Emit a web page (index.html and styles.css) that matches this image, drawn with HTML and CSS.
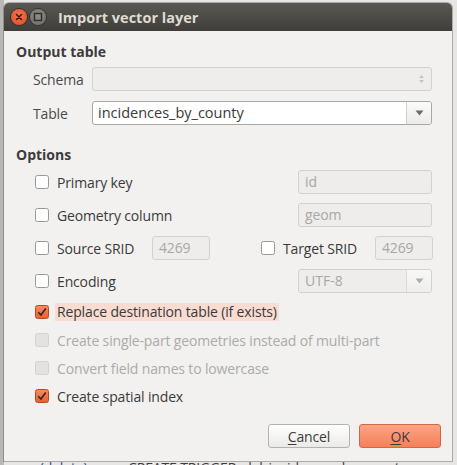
FILE: index.html
```html
<!DOCTYPE html>
<html>
<head>
<meta charset="utf-8">
<link rel="stylesheet" href="styles.css">
</head>
<body>
<div class="desk">
  <div class="dialog">
    <div class="titlebar">
      <span class="wbtn close"><svg width="16" height="16" viewBox="0 0 16 16"><path d="M5.5 5.5l5 5M10.5 5.5l-5 5" stroke="#3a1a10" stroke-width="1.6" stroke-linecap="round"/></svg></span>
      <span class="wbtn mini"><svg width="16" height="16" viewBox="0 0 16 16"><rect x="4.5" y="4.5" width="7" height="7" fill="none" stroke="#2e2d2a" stroke-width="1.4"/></svg></span>
      <span class="title">Import vector layer</span>
    </div>
    <div class="content">
      <div class="heading">Output table</div>
      <div class="formrow first">
        <span class="flabel">Schema</span>
        <div class="spin">
          <div class="spin-arrows">
            <svg width="7" height="12" viewBox="0 0 7 12"><path d="M1 5l2.5-3 2.5 3z M1 7l2.5 3 2.5-3z" fill="#c4c2be"/></svg>
          </div>
        </div>
      </div>
      <div class="formrow">
        <span class="flabel">Table</span>
        <div class="combo white">
          <span class="combo-text">incidences_by_county</span>
          <span class="combo-btn"><svg width="9" height="6" viewBox="0 0 9 6"><path d="M0.5 0.5h8l-4 5z" fill="#6e6c68"/></svg></span>
        </div>
      </div>

      <div class="heading options">Options</div>
      <div class="opts">
        <div class="orow">
          <label class="chk"><span class="box"></span><span>Primary key</span></label>
          <div class="field wide">id</div>
        </div>
        <div class="orow">
          <label class="chk"><span class="box"></span><span>Geometry column</span></label>
          <div class="field wide">geom</div>
        </div>
        <div class="orow">
          <label class="chk src"><span class="box"></span><span>Source SRID</span></label>
          <div class="field narrow">4269</div>
          <label class="chk tgt"><span class="box"></span><span>Target SRID</span></label>
          <div class="field narrow">4269</div>
        </div>
        <div class="orow">
          <label class="chk"><span class="box"></span><span>Encoding</span></label>
          <div class="combo dis wide">
            <span class="combo-text">UTF-8</span>
            <span class="combo-btn"><svg width="9" height="6" viewBox="0 0 9 6"><path d="M0.5 0.5h8l-4 5z" fill="#b0aeaa"/></svg></span>
          </div>
        </div>
      </div>
      <div class="opts2">
        <div class="srow">
          <label class="chk"><span class="box on"><svg width="12" height="12" viewBox="0 0 12 12"><path d="M2.3 6.2l2.6 2.8 4.9-6.5" fill="none" stroke="#3d2218" stroke-width="1.6"/></svg></span><span class="hl">Replace destination table (if exists)</span></label>
        </div>
        <div class="srow">
          <label class="chk disabled"><span class="box"></span><span>Create single-part geometries instead of multi-part</span></label>
        </div>
        <div class="srow">
          <label class="chk disabled"><span class="box"></span><span>Convert field names to lowercase</span></label>
        </div>
        <div class="srow">
          <label class="chk"><span class="box on"><svg width="12" height="12" viewBox="0 0 12 12"><path d="M2.3 6.2l2.6 2.8 4.9-6.5" fill="none" stroke="#3d2218" stroke-width="1.6"/></svg></span><span>Create spatial index</span></label>
        </div>
      </div>
      <div class="buttons">
        <button class="btn cancel"><u>C</u>ancel</button>
        <button class="btn ok"><u>O</u>K</button>
      </div>
    </div>
  </div>
  <div class="behind"><span class="b1">geom <span class="blue">(delete)</span></span><span class="b2">CREATE TRIGGER&nbsp; del_incidences_by_county_v</span></div>
</div>
</body>
</html>
```

FILE: styles.css
```css
html, body {
  margin: 0;
  padding: 0;
  width: 457px;
  height: 465px;
  overflow: hidden;
  background: #d6d5d3;
  font-family: "Open Sans", "DejaVu Sans", sans-serif;
  font-size: 14px;
  letter-spacing: -0.15px;
  color: #3a3a3a;
}
.desk {
  padding: 3px 5px 0 4px;
  background: linear-gradient(to right, #b9b8b6 0, #b9b8b6 4px, #e7e6e4 4px);
}
.dialog {
  width: 448px;
  height: 458px;
  display: flex;
  flex-direction: column;
  background: #f2f1f0;
  border-radius: 5px 5px 0 0;
  box-shadow: 0 0 0 1px rgba(60, 60, 60, 0.35);
}
.titlebar {
  height: 28px;
  flex: none;
  display: flex;
  align-items: center;
  padding-left: 7px;
  background: linear-gradient(#5a5852, #3f3e3a);
  border-radius: 5px 5px 0 0;
}
.wbtn {
  width: 16px;
  height: 16px;
  border-radius: 50%;
  display: flex;
  margin-right: 3px;
}
.close {
  background: radial-gradient(circle at 50% 40%, #f47552, #dd4a22);
  box-shadow: 0 0 0 1px #3a2a22;
}
.mini {
  background: radial-gradient(circle at 50% 40%, #8e8d88, #6c6b66);
  box-shadow: 0 0 0 1px #33322f;
}
.title {
  margin-left: 9px;
  font-weight: bold;
  font-size: 14.5px;
  letter-spacing: 0;
  color: #dfdbd2;
  margin-top: 1px;
}
.content {
  flex: 1;
  display: flex;
  flex-direction: column;
  padding: 12px 20px 0 12px;
}
.heading {
  font-weight: bold;
  font-size: 14px;
  letter-spacing: 0;
  height: 18px;
  line-height: 18px;
  color: #3c3c3c;
}
.formrow {
  display: flex;
  align-items: center;
  height: 24px;
  margin-top: 10px;
  padding-left: 17px;
}
.formrow.first {
  margin-top: 6px;
}
.flabel {
  width: 59px;
  color: #4a4a4a;
}
.spin {
  flex: 1;
  height: 24px;
  box-sizing: border-box;
  border: 1px solid #d3d1cd;
  border-radius: 3px;
  background: #eeedeb;
  display: flex;
  justify-content: flex-end;
  align-items: center;
}
.spin-arrows {
  width: 20px;
  display: flex;
  justify-content: center;
}
.combo {
  height: 24px;
  box-sizing: border-box;
  border: 1px solid #a9a7a2;
  border-radius: 3px;
  display: flex;
  align-items: stretch;
}
.combo.white {
  flex: 1;
  background: #ffffff;
}
.combo-text {
  flex: 1;
  padding-left: 5px;
  line-height: 22px;
  font-size: 14.5px;
  letter-spacing: 0;
}
.combo-btn {
  width: 24px;
  border-left: 1px solid #d0cec9;
  display: flex;
  align-items: center;
  justify-content: center;
  background: linear-gradient(#fbfbfa, #ecebe9);
  border-radius: 0 2px 2px 0;
}
.combo.dis {
  border-color: #d3d1cd;
  background: #eeedeb;
  color: #a9a7a3;
}
.combo.dis .combo-text {
  font-size: 14px;
  padding-left: 6px;
}
.combo.dis .combo-btn {
  border-left-color: #dcdad6;
  background: linear-gradient(#f8f8f7, #efeeec);
}
.options {
  margin-top: 21px;
}
.opts {
  display: flex;
  flex-direction: column;
  gap: 9px;
  margin-top: 6px;
}
.orow {
  display: flex;
  align-items: center;
  height: 24px;
  padding-left: 19px;
}
.chk {
  display: flex;
  align-items: center;
  gap: 8px;
  flex: 1;
  white-space: nowrap;
}
.chk.src {
  flex: none;
  width: 117px;
}
.chk.tgt {
  flex: none;
  width: 114px;
  margin-left: 51px;
}
.box {
  width: 14px;
  height: 14px;
  box-sizing: border-box;
  border: 1px solid #9b9994;
  border-radius: 2.5px;
  background: #ffffff;
  flex: none;
  display: flex;
  align-items: center;
  justify-content: center;
}
.box.on {
  background: linear-gradient(#f58b62, #e8622f);
  border-color: #b84a22;
}
.chk.disabled {
  color: #ababa8;
}
.chk.disabled .box {
  background: #e4e2df;
  border-color: #d4d2ce;
}
.hl {
  background: #f8dcd2;
  padding: 0 2px;
  margin-left: -2px;
  line-height: 18px;
}
.field {
  height: 24px;
  box-sizing: border-box;
  border: 1px solid #d3d1cd;
  border-radius: 3px;
  background: #eeedeb;
  color: #a9a7a3;
  padding-left: 6px;
  line-height: 22px;
}
.wide {
  width: 134px;
  flex: none;
}
.narrow {
  width: 58px;
  flex: none;
}
.opts2 {
  display: flex;
  flex-direction: column;
  gap: 8px;
  margin-top: 9px;
}
.srow {
  height: 20px;
  display: flex;
  align-items: center;
  padding-left: 19px;
}
.buttons {
  display: flex;
  justify-content: flex-end;
  gap: 9px;
  margin-top: 18px;
  margin-right: -9px;
}
.btn {
  width: 82px;
  height: 24px;
  font-family: inherit;
  font-size: 14px;
  letter-spacing: -0.15px;
  color: #3c3c3c;
  border-radius: 3px;
  padding: 0;
}
.btn u {
  text-underline-offset: 2px;
}
.cancel {
  border: 1px solid #b4b2ad;
  background: linear-gradient(#ffffff, #ebeae8);
}
.ok {
  border: 1px solid #d0694a;
  background: linear-gradient(#fca383, #f5805a);
}
.behind {
  height: 10px;
  white-space: nowrap;
  font-size: 14px;
  line-height: 14px;
  color: #3c3c3c;
  margin-left: -4px;
}
.b1 {
  display: inline-block;
  width: 128px;
}
.blue {
  color: #2a4d8f;
}
```
